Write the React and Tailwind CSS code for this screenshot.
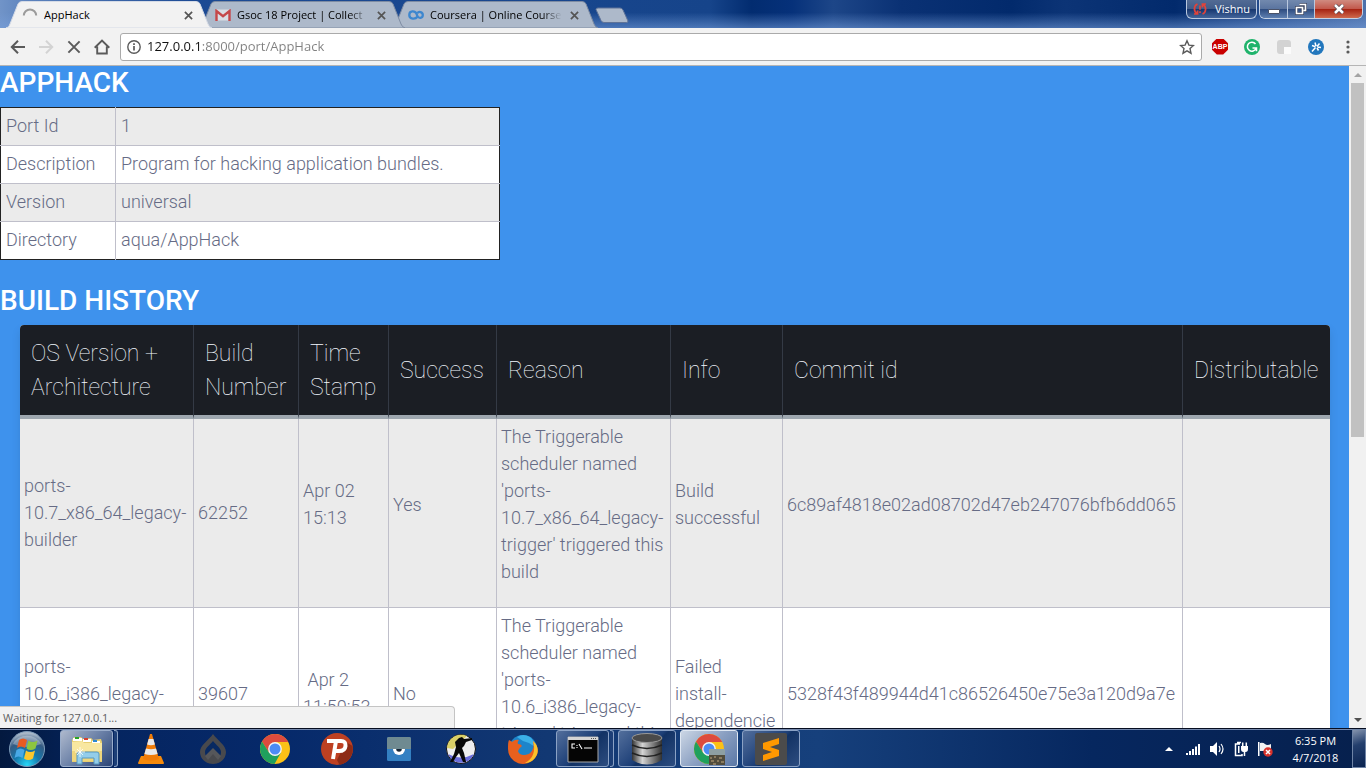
const UI = "font-['Open_Sans','Noto_Sans',sans-serif]";

const portDetails = [
  ["Port Id", "1"],
  ["Description", "Program for hacking application bundles."],
  ["Version", "universal"],
  ["Directory", "aqua/AppHack"],
];

const columns = [
  { title: "OS Version + Architecture", width: "w-[174px]" },
  { title: "Build Number", width: "w-[105px]" },
  { title: "Time Stamp", width: "w-[90px]" },
  { title: "Success", width: "w-[108px]" },
  { title: "Reason", width: "w-[174px]" },
  { title: "Info", width: "w-[112px]" },
  { title: "Commit id", width: "w-[400px]" },
  { title: "Distributable", width: "" },
];

const builds = [
  {
    spaced: [false, false, true, true, true, true, true, true],
    cells: [
      "ports-10.7_x86_64_legacy-builder",
      "62252",
      "Apr 02 15:13",
      "Yes",
      "The Triggerable scheduler named 'ports-10.7_x86_64_legacy-trigger' triggered this build",
      "Build successful",
      "6c89af4818e02ad08702d47eb247076bfb6dd065",
      "",
    ],
  },
  {
    spaced: [true, true, true, true, true, true, true, true],
    cells: [
      "ports-10.6_i386_legacy-builder",
      "39607",
      "\u00a0Apr 2 11:50:53",
      "No",
      "The Triggerable scheduler named 'ports-10.6_i386_legacy-trigger' triggered this build",
      "Failed install-dependencie",
      "5328f43f489944d41c86526450e75e3a120d9a7e",
      "",
    ],
  },
];

function Cross({ className = "", weight = 1.9 }) {
  return (
    <svg viewBox="0 0 10 10" className={className} fill="none" stroke="currentColor" strokeWidth={weight}>
      <path d="M1 1l8 8M9 1l-8 8" />
    </svg>
  );
}

function Tab({ active, icon, title, layer }) {
  return (
    <div className={`relative -mr-[13px] flex h-[27px] w-[206px] items-center pt-px pr-4 pl-4 ${layer}`}>
      <svg viewBox="0 0 206 27" preserveAspectRatio="none" className="absolute inset-0 h-full w-full">
        <path
          d="M0 27C3 26 3 25 4 23L12 3Q13 .5 16 .5H190Q193 .5 194 3L202 23Q203 26 206 27Z"
          fill={active ? "#f2f2f2" : "#adb9ca"}
          stroke={active ? "#d5dbe6" : "#7e8ca3"}
          strokeWidth="1"
        />
      </svg>
      <button className="relative flex min-w-0 flex-1 items-center gap-[6px] text-left">
        <span className="flex w-4 shrink-0 justify-center">{icon}</span>
        <span className={`block flex-1 overflow-hidden text-[11px] whitespace-nowrap text-black ${active ? "" : "[mask-image:linear-gradient(90deg,#000_85%,transparent)]"}`}>
          {title}
        </span>
      </button>
      <button aria-label="Close tab" className="relative ml-1 flex w-4 justify-center text-[#555]">
        <Cross className="h-[9px] w-[9px]" />
      </button>
    </div>
  );
}

function TitleBar() {
  return (
    <header className="flex h-7 shrink-0 items-end overflow-hidden bg-[linear-gradient(180deg,transparent_45%,rgba(120,160,220,0.55)_100%),linear-gradient(90deg,#7194c8_0%,#5d83bd_2%,#1c4a94_14%,#16448a_52%,#022c70_55%,#06317a_58%,#1d4688_61%,#0a3174_66%,#022a6c_74%,#0c3476_78%,#022a6c_86%,#284f8f_93%,#4d71ab_100%)] pl-[6px]">
      <Tab
        active
        layer="z-30"
        title="AppHack"
        icon={
          <svg viewBox="0 0 16 16" className="h-4 w-4" fill="none" stroke="#9b9b9b" strokeWidth="2">
            <path d="M1.8 8.6A6.2 6.2 0 0 1 14.2 8.6" />
          </svg>
        }
      />
      <Tab
        layer="z-20"
        title="Gsoc 18 Project | Collect"
        icon={
          <svg viewBox="0 0 16 12" className="h-3 w-4">
            <path d="M1 .5h14v11H1z" fill="#d9dde5" />
            <path d="M1.5 12V2L8 7.2 14.5 2V12" fill="none" stroke="#c5474a" strokeWidth="2.4" />
          </svg>
        }
      />
      <Tab
        layer="z-10"
        title="Coursera | Online Course"
        icon={
          <svg viewBox="0 0 16 10" className="h-[10px] w-4" fill="none" stroke="#3d87cf" strokeWidth="2.3">
            <path d="M9.4 6.6C7.7 9.4 1.3 9.6 1.3 5S7 .6 8.4 3.6L9.2 5.6C10.5 9 14.8 8.3 14.8 5S10.6 1 9.4 3.2" />
          </svg>
        }
      />
      <button aria-label="New tab" className="mb-1 ml-[10px]">
        <svg viewBox="0 0 34 17" className="h-[17px] w-[34px]">
          <path d="M3 1h22q2 0 3 2l5 11q0 1.500-1.500 1.500H9q-2 0-3-2L1 2.500Q1 1 3 1z" fill="#adb9ca" stroke="#5f7398" />
        </svg>
      </button>
      <div className="mr-[3px] ml-auto flex gap-[2px] self-start">
        <button className={`flex h-[19px] w-[71px] items-center justify-center gap-2 rounded-b-md border border-t-0 border-[#b9c8df] bg-[linear-gradient(#526b94_0%,#415c89_50%,#17376f_52%,#43659a_100%)] text-[11px] text-white ${UI}`}>
          <svg viewBox="0 0 14 12" className="h-3 w-[14px]" fill="none" stroke="#e0433a" strokeWidth="1.700">
            <path d="M4.500 1C.5 2.500.5 8.500 4 10.700M1 11h3.600V7.600M9.500 11C13.500 9.500 13.500 3.500 10 1.300M13 1H9.400v3.400M7 2.500v4.300M7 8.200v1.700" />
          </svg>
          Vishnu
        </button>
        <div className="flex h-[19px] overflow-hidden rounded-b-md border border-t-0 border-[#c5d1e4]">
          <button aria-label="Minimize" className="flex w-7 items-center justify-center border-r border-[#b9c8df] bg-[linear-gradient(#7289ae_0%,#5a749f_50%,#2e4c80_52%,#5f80b1_100%)]">
            <span className="mt-1 h-[5px] w-3 rounded-[1px] border border-[#4a5268] bg-white" />
          </button>
          <button aria-label="Restore" className="flex w-[27px] items-center justify-center border-r border-[#b9c8df] bg-[linear-gradient(#7289ae_0%,#5a749f_50%,#2e4c80_52%,#5f80b1_100%)]">
            <svg viewBox="0 0 12 12" className="h-3 w-3" fill="none">
              <path d="M4.500 1.500h6v6h-2M1.500 4.500h6v6h-6z" stroke="#3c4660" strokeWidth="3" />
              <path d="M4.500 1.500h6v6h-2M1.500 4.500h6v6h-6z" stroke="#fff" strokeWidth="1.600" />
            </svg>
          </button>
          <button aria-label="Close" className="flex w-[47px] items-center justify-center bg-[linear-gradient(#d08b80_0%,#c2574a_50%,#a62413_52%,#cf6a4d_100%)]">
            <svg viewBox="0 0 12 10" className="h-[10px] w-3" fill="none">
              <path d="M2 1l8 8M10 1L2 9" stroke="#52444f" strokeWidth="4" />
              <path d="M2 1l8 8M10 1L2 9" stroke="#fff" strokeWidth="2.500" />
            </svg>
          </button>
        </div>
      </div>
    </header>
  );
}

function Toolbar() {
  return (
    <nav className="flex h-[38px] shrink-0 items-center border-b border-[#b5b5b5] bg-[#f2f2f2] pr-[10px] pl-[10px] text-[#5a5a5a]">
      <div className="flex items-center gap-3">
        <button aria-label="Back">
          <svg viewBox="0 0 16 16" className="h-4 w-4" fill="none" stroke="currentColor" strokeWidth="2">
            <path d="M15 8H2.500M8 1.800L1.800 8 8 14.200" />
          </svg>
        </button>
        <button aria-label="Forward" className="text-[#d3d3d3]">
          <svg viewBox="0 0 16 16" className="h-4 w-4" fill="none" stroke="currentColor" strokeWidth="2">
            <path d="M1 8h12.500M8 1.800L14.200 8 8 14.200" />
          </svg>
        </button>
        <button aria-label="Stop loading" className="flex w-4 justify-center">
          <Cross className="h-[14px] w-[14px]" weight={1.4} />
        </button>
        <button aria-label="Home">
          <svg viewBox="0 0 16 16" className="h-4 w-4" fill="none" stroke="currentColor" strokeWidth="1.900">
            <path d="M.7 8.800L8 1.600l7.300 7.200M3.200 7.500v7h9.600v-7" />
          </svg>
        </button>
      </div>
      <div className="ml-[10px] flex h-7 flex-1 items-center rounded-[3px] border border-[#aaa] bg-white px-[6px]">
        <svg viewBox="0 0 14 14" className="h-[14px] w-[14px] shrink-0" fill="none" stroke="currentColor" strokeWidth="1.400">
          <circle cx="7" cy="7" r="6.200" />
          <path d="M7 6v4.500M7 3.200v1.700" strokeWidth="1.700" />
        </svg>
        <input
          aria-label="Address"
          defaultValue="127.0.0.1:8000/port/AppHack"
          className={`ml-[6px] min-w-0 flex-1 bg-[linear-gradient(90deg,#111_54px,#808080_54px)] bg-clip-text pt-px text-[13px] text-transparent outline-none ${UI}`}
        />
        <button aria-label="Bookmark this page">
          <svg viewBox="0 0 16 16" className="h-4 w-4" fill="none" stroke="currentColor" strokeWidth="1.400">
            <path d="M8 1.800l1.900 4.300 4.600.4-3.500 3.100 1 4.600L8 11.800l-4 2.400 1-4.600L1.500 6.500l4.600-.4z" />
          </svg>
        </button>
      </div>
      <div className="ml-[10px] flex items-center gap-4">
        <button aria-label="Adblock Plus" className="flex h-4 w-4 items-center justify-center bg-[#c90000] text-[7px] leading-none font-bold text-white [clip-path:polygon(30%_0,70%_0,100%_30%,100%_70%,70%_100%,30%_100%,0_70%,0_30%)] font-['Liberation_Sans',sans-serif]">
          ABP
        </button>
        <button aria-label="Grammarly">
          <svg viewBox="0 0 16 16" className="h-4 w-4" fill="none">
            <circle cx="8" cy="8" r="8" fill="#1fb36b" />
            <path d="M11.500 5A4.500 4.500 0 1 0 12 9.500M8.500 9h4v3.200" stroke="#fff" strokeWidth="1.500" />
          </svg>
        </button>
        <button aria-label="Extension">
          <svg viewBox="0 0 16 16" className="h-4 w-4">
            <rect x="1" y="1" width="14" height="14" rx="3" fill="#d3d3d3" />
            <path d="M8 8h7v7H8z" fill="#fbfbfb" />
          </svg>
        </button>
        <button aria-label="Extension">
          <svg viewBox="0 0 16 16" className="h-4 w-4">
            <circle cx="8" cy="8" r="8" fill="#2277bd" />
            <path d="M4 6.500l3.500 1.200M7 3.500l1 3.500M11.500 4.500L9 7.500M13 8.500L9.500 8M10.500 11.500L9 9M4 12.500L7.500 8.500" stroke="#fff" strokeWidth="1.500" />
          </svg>
        </button>
        <button aria-label="Menu">
          <svg viewBox="0 0 16 16" className="h-4 w-4" fill="currentColor">
            <circle cx="8" cy="3" r="1.600" />
            <circle cx="8" cy="8" r="1.600" />
            <circle cx="8" cy="13" r="1.600" />
          </svg>
        </button>
      </div>
    </nav>
  );
}

function Page() {
  return (
    <main className="min-w-0 flex-1 overflow-hidden bg-[#3e92ed] text-lg leading-[27px] font-light text-[#666b85] font-['Roboto',sans-serif]">
      <h1 className="mb-[7px] text-[28px] leading-[34px] font-medium text-white">APPHACK</h1>
      <table className="w-[500px] border-collapse border border-[#222] bg-white">
        <tbody>
          {portDetails.map(([name, value]) => (
            <tr key={name} className="border-t border-[#bfbfca] first:border-t-[#222] odd:bg-[#ebebeb]">
              <th scope="row" className="w-[115px] border-r border-[#bfbfca] px-[5px] pt-1 pb-[6px] text-left font-light">{name}</th>
              <td className="px-[5px] pt-1 pb-[6px]">{value}</td>
            </tr>
          ))}
        </tbody>
      </table>
      <h1 className="mt-6 mb-[7px] text-[28px] leading-[34px] font-medium text-white">BUILD HISTORY</h1>
      <div className="mr-[19px] ml-5 overflow-hidden rounded-t bg-white shadow-[0_5px_10px_rgba(0,0,0,0.1)]">
        <table className="w-full table-fixed border-separate border-spacing-0">
          <thead>
            <tr>
              {columns.map((c) => (
                <th
                  key={c.title}
                  scope="col"
                  className={`${c.width} h-[94px] border-r border-b-4 border-r-[#343a45] border-b-[#9ea7af] bg-[#1b1e24] pt-[2px] pr-[9px] pl-[11px] text-left text-[23px] leading-[34px] font-thin text-[#f4f9ff] last:border-r-0`}
                >
                  {c.title}
                </th>
              ))}
            </tr>
          </thead>
          <tbody>
            {builds.map((b) => (
              <tr key={b.cells[1]} className="odd:bg-[#ebebeb] even:bg-white">
                {b.cells.map((text, i) => (
                  <td key={columns[i].title} className="border-r border-b border-[#bfbfca] pt-1 pr-[5px] pb-[6px] pl-1 last:border-r-0">
                    <p className={b.spaced[i] ? "mb-4" : ""}>{text}</p>
                  </td>
                ))}
              </tr>
            ))}
          </tbody>
        </table>
      </div>
    </main>
  );
}

function Scrollbar() {
  return (
    <div className="flex w-[17px] shrink-0 flex-col items-center bg-[#f1f1f1]">
      <span className="flex h-[17px] items-center">
        <svg viewBox="0 0 8 4" className="h-1 w-2" fill="#a3a3a3"><path d="M4 0l4 4H0z" /></svg>
      </span>
      <div className="flex w-[13px] flex-1 flex-col">
        <div className="h-[56.4%] bg-[#c1c1c1]" />
      </div>
      <span className="flex h-[17px] items-center">
        <svg viewBox="0 0 8 4" className="h-1 w-2" fill="#505050"><path d="M0 0h8L4 4z" /></svg>
      </span>
    </div>
  );
}

function ChromeLogo() {
  return (
    <>
      <circle cx="16" cy="16" r="15" fill="#fbc116" />
      <path d="M16 9h13.300a15 15 0 0 0-.3-.5A15 15 0 0 0 3 8.500L10 19.500z" fill="#dd4b3e" />
      <path d="M3 8.500A15 15 0 0 0 15.500 31L22 19.500 10 19.500z" fill="#1fa05d" />
      <circle cx="16" cy="16" r="6.900" fill="#f4f4f4" />
      <circle cx="16" cy="16" r="5.500" fill="#4c8bf5" />
    </>
  );
}

const apps = [
  {
    name: "File Explorer",
    frame: "stack-light",
    art: (
      <>
        <path d="M1 7l2-3h7l2 2 8-1 2 2 8-1 1 3v20H1z" fill="#e8cf71" />
        <path d="M2 5h9v3H2zM12 6h8v3h-8zM21 8h8v3h-8z" fill="#fff" />
        <path d="M4 4h4v2H4z" fill="#29a329" />
        <path d="M13 5h4v2h-4z" fill="#d8412f" />
        <path d="M22 7h4v2h-4z" fill="#2d87cf" />
        <path d="M1 9l10-1 2 2h18v18H1z" fill="#f8e7a0" />
        <path d="M1 18h30v10H1z" fill="#efd67c" />
        <path d="M6 31V21q0-2 2-2h18q2 0 2 2v10h-5v-6H11v6z" fill="#93cdea" stroke="#5598c2" />
        <path d="M9 14v10M4 19h10M6 16l6 6M12 16l-6 6" stroke="#fff" strokeWidth=".8" />
      </>
    ),
  },
  {
    name: "VLC",
    art: (
      <>
        <path d="M6 23h20l3 7q0 1-1 1H4q-1 0-1-1z" fill="#f58a0b" />
        <path d="M15 1h2l7 25q-8 3-16 0z" fill="#f07c08" />
        <path d="M13.600 6h4.800l1.500 5.500q-3.900 1.500-7.800 0zM11 15.500q5 1.500 10 0l1.600 5.500q-6.600 2-13.200 0z" fill="#e9e9ea" />
      </>
    ),
  },
  {
    name: "Launcher",
    art: (
      <>
        <path d="M16 1c4 6 13 11 13 18a13 12 0 0 1-26 0C3 12 12 7 16 1z" fill="#48494d" />
        <path d="M16 8c3 4 8 7 8 11 0 3-1 5-3 6l-5-5-5 5c-2-1-3-3-3-6 0-4 5-7 8-11z" fill="#082961" />
        <path d="M8 23l8-8 8 8-3 4-5-6-5 6z" fill="#56575a" />
      </>
    ),
  },
  { name: "Chrome", art: <ChromeLogo /> },
  {
    name: "Psiphon",
    art: (
      <>
        <circle cx="16" cy="16" r="16" fill="#bd4022" />
        <path d="M16 27L25 9l6.500 4a16 16 0 0 1-13 18.800z" fill="#8d2b16" />
        <path d="M6 8h14q5 0 4.500 5t-6.500 5h-4M15 8l-3 18" fill="none" stroke="#fff" strokeWidth="4" />
      </>
    ),
  },
  {
    name: "Viewer",
    art: (
      <>
        <rect x="4" y="4" width="24" height="24" rx="1.500" fill="#3380c2" />
        <path d="M4 5.500Q4 4 5.500 4h21Q28 4 28 5.500V16H4z" fill="#6f8a91" />
        <path d="M10 16h12a6 6 0 0 1-12 0z" fill="#fff" />
        <path d="M13.200 16h5.600a2.800 2.800 0 0 1-5.600 0z" fill="#152636" />
      </>
    ),
  },
  {
    name: "Counter-Strike",
    art: (
      <>
        <circle cx="16" cy="16" r="14.500" fill="#eee" stroke="#111" />
        <path d="M2 15a14 14 0 0 1 20-12L8 16z" fill="#d9cf67" />
        <path d="M3 21q13 7 26 0a14 14 0 0 1-26 0z" fill="#6a6ddb" />
        <path d="M14 5l3-1 2 2 8-1v2l-6 2-2 4-2 2 2 5 2 9h-3l-4-9-3 4-3 5H5l4-8 2-7-1-5z" fill="#080808" />
      </>
    ),
  },
  {
    name: "Firefox",
    art: (
      <>
        <circle cx="16" cy="16" r="14" fill="#1d84ca" />
        <path d="M10 4q6-4 13 0 4 3 5 10l-6-4-6-2z" fill="#3bb0e8" />
        <path d="M2 7q2 1 3 2 3-3 7-2-2 2-1 4 3 0 4 2-3 2-4 5 1 4 6 4c7 0 11-6 9-14 6 5 6 12 2 17a15 15 0 0 1-27-9C1 12 1 9 2 7z" fill="#e8601e" />
        <path d="M26 8c6 5 6 12 2 17-3 4-7 5-10 5 8-4 11-12 8-22z" fill="#fbc32b" />
      </>
    ),
  },
  {
    name: "Command Prompt",
    frame: "stack",
    art: (
      <>
        <path d="M1 4h30v25H1z" fill="#050505" stroke="#aaa" />
        <path d="M1 4h30v3H1z" fill="#d4d4d4" />
        <path d="M24 5.500h5" stroke="#555" strokeDasharray="1 1" />
        <path d="M8 11H5v4h3M10 12v1M10 14v1M12 11l3 5M17 15h8" fill="none" stroke="#fff" strokeWidth="1.100" />
      </>
    ),
  },
  {
    name: "Database",
    frame: "plain",
    art: (
      <>
        <defs>
          <linearGradient id="disk" x1="0" x2="1">
            <stop offset="0" stopColor="#333" />
            <stop offset=".35" stopColor="#d5d5d5" />
            <stop offset="1" stopColor="#303030" />
          </linearGradient>
        </defs>
        <path d="M1 5v22q15 9 30 0V5z" fill="url(#disk)" />
        <path d="M1 12q15 7 30 0M1 20q15 7 30 0" fill="none" stroke="#222" strokeWidth="1.500" />
        <ellipse cx="16" cy="5" rx="15" ry="4.500" fill="#4a4a4a" stroke="#999" />
      </>
    ),
  },
  {
    name: "Chrome window",
    frame: "active",
    art: (
      <>
        <ChromeLogo />
        <path d="M16 16h16v16H16z" fill="#514c3c" />
        <path d="M16 16h16v6H16z" fill="#8ea0a3" />
        <path d="M17 25h2M21 24h2M26 25h3M18 28h3M24 28h2M28 29h3M20 31h3" fill="none" stroke="#c5aa81" />
      </>
    ),
  },
  {
    name: "Sublime Text",
    frame: "plain",
    art: (
      <>
        <rect width="32" height="32" rx="2" fill="#4b4b4b" />
        <path d="M24 5v6l-9 3 9 3v6L8 28v-6l9-3-9-3v-6z" fill="#ff9800" />
      </>
    ),
  },
];

const frames = {
  plain: "border border-[#8ba2c5] bg-[linear-gradient(135deg,#536f9c,#1d3f77_50%,#123264_55%,#2d4d80)]",
  stack: "border border-[#8ba2c5] bg-[linear-gradient(135deg,#536f9c,#1d3f77_50%,#123264_55%,#2d4d80)]",
  "stack-light": "border border-[#9aadcb] bg-[linear-gradient(135deg,#aeb9cd,#697fa6_50%,#2c4576)]",
  active: "border border-[#dfe7f2] bg-[linear-gradient(135deg,#cbd6e5,#8ba0c2_50%,#5b78a6)]",
};

function Taskbar() {
  return (
    <footer className={`flex h-10 shrink-0 items-stretch border-t border-[#060d20] bg-[linear-gradient(90deg,#03193f_0%,#052560_8%,#06296a_20%,#123873_40%,#16407c_60%,#06275f_80%,#06204d_100%)] text-white shadow-[inset_0_1px_0_#7488ad] ${UI}`}>
      <button aria-label="Start" className="flex w-[58px] items-center pl-2">
        <svg viewBox="0 0 38 38" className="h-[38px] w-[38px]">
          <defs>
            <radialGradient id="orb" cx=".5" cy=".95" r=".9">
              <stop offset="0" stopColor="#27d8f8" />
              <stop offset=".4" stopColor="#1479ad" />
              <stop offset=".75" stopColor="#355b83" />
              <stop offset="1" stopColor="#a9b8c9" />
            </radialGradient>
          </defs>
          <circle cx="19" cy="19" r="17.500" fill="url(#orb)" stroke="#7d9bb9" />
          <path d="M5 14a15 13 0 0 1 28 0q-14 6-28 0z" fill="#fff" opacity=".3" />
          <path d="M11 10q4-3 8 0l-2 8q-4-3-8 0z" fill="#e85a22" />
          <path d="M20.500 10.500q4 3 9 0l-2 8q-5 3-9 0z" fill="#8cc63f" />
          <path d="M8.500 20q4-3 8 0l-2 8q-4-3-8 0z" fill="#48a9e6" />
          <path d="M18 20.500q4 3 9 0l-2 8q-5 3-9 0z" fill="#fcc72c" />
        </svg>
      </button>
      <div className="flex">
        {apps.map((app) => (
          <button key={app.name} aria-label={app.name} className="flex w-[62px] gap-px px-[2px] pt-px pb-px">
            <span className={`flex flex-1 items-center justify-center rounded-[3px] ${app.frame ? frames[app.frame] : ""}`}>
              <svg viewBox="0 0 32 32" className="h-8 w-8">{app.art}</svg>
            </span>
            {app.frame && app.frame.startsWith("stack") && (
              <span className="h-full w-1 rounded-r-[3px] border border-l-0 border-[#8ba2c5] bg-[#1d3f77]" />
            )}
          </button>
        ))}
      </div>
      <div className="ml-auto flex items-center">
        <div className="flex items-center gap-2">
          <button aria-label="Show hidden icons" className="flex w-4 justify-center">
            <svg viewBox="0 0 8 4" className="h-1 w-2" fill="#fff"><path d="M4 0l4 4H0z" /></svg>
          </button>
          <svg viewBox="0 0 16 16" className="h-4 w-4" fill="#fff">
            <path d="M1 12h2v2H1zM4 10h2v4H4zM7 8h2v6H7zM10 5.500h2V14h-2zM13 3h2v11h-2z" />
          </svg>
          <svg viewBox="0 0 16 16" className="h-4 w-4" fill="#fff">
            <path d="M1 5h3l4-4v14l-4-4H1z" />
            <path d="M10 5q2 3 0 6M12 3q4 5 0 10" fill="none" stroke="#fff" strokeWidth="1.200" />
          </svg>
          <svg viewBox="0 0 16 16" className="h-4 w-4" fill="none" stroke="#fff" strokeWidth="1.500">
            <path d="M7 3H2.500v11.500H9V13M4 1.500h4" />
            <path d="M5 5h1.500v7H5z" fill="#fff" stroke="none" />
            <path d="M8 5h7v3q0 3-2.500 3h-2Q8 11 8 8z" fill="#fff" stroke="none" />
            <path d="M9.700 5V1.500M13.300 5V1.500M11.500 11v4" />
          </svg>
          <svg viewBox="0 0 16 16" className="h-4 w-4">
            <path d="M1 1h1.500v14H1z" fill="#fff" />
            <path d="M3 2q3-1 5 1t6 0v7H3z" fill="#f2f2f2" />
            <circle cx="11" cy="11" r="4.700" fill="#d9322b" />
            <path d="M9 9l4 4M13 9l-4 4" stroke="#fff" strokeWidth="1.500" />
          </svg>
        </div>
        <div className="w-[79px] pl-[6px] text-center text-[11px] leading-[17px]">
          <p>6:35 PM</p>
          <p>4/7/2018</p>
        </div>
        <button aria-label="Show desktop" className="h-full w-[14px] border border-[#6f84a6] bg-[linear-gradient(160deg,#8493ad,#243f6d_40%,#0a2350)]" />
      </div>
    </footer>
  );
}

export default function App() {
  return (
    <div className="flex h-screen flex-col overflow-hidden">
      <div className={UI}>
        <TitleBar />
      </div>
      <Toolbar />
      <div className="relative flex min-h-0 flex-1">
        <Page />
        <Scrollbar />
        <div className={`absolute bottom-0 left-0 h-[22px] w-1/3 rounded-tr border-t border-r border-[#c4c4c4] bg-[#f2f2f2] pl-[3px] text-[11px] leading-[22px] text-[#606060] ${UI}`}>
          Waiting for 127.0.0.1...
        </div>
      </div>
      <Taskbar />
    </div>
  );
}
